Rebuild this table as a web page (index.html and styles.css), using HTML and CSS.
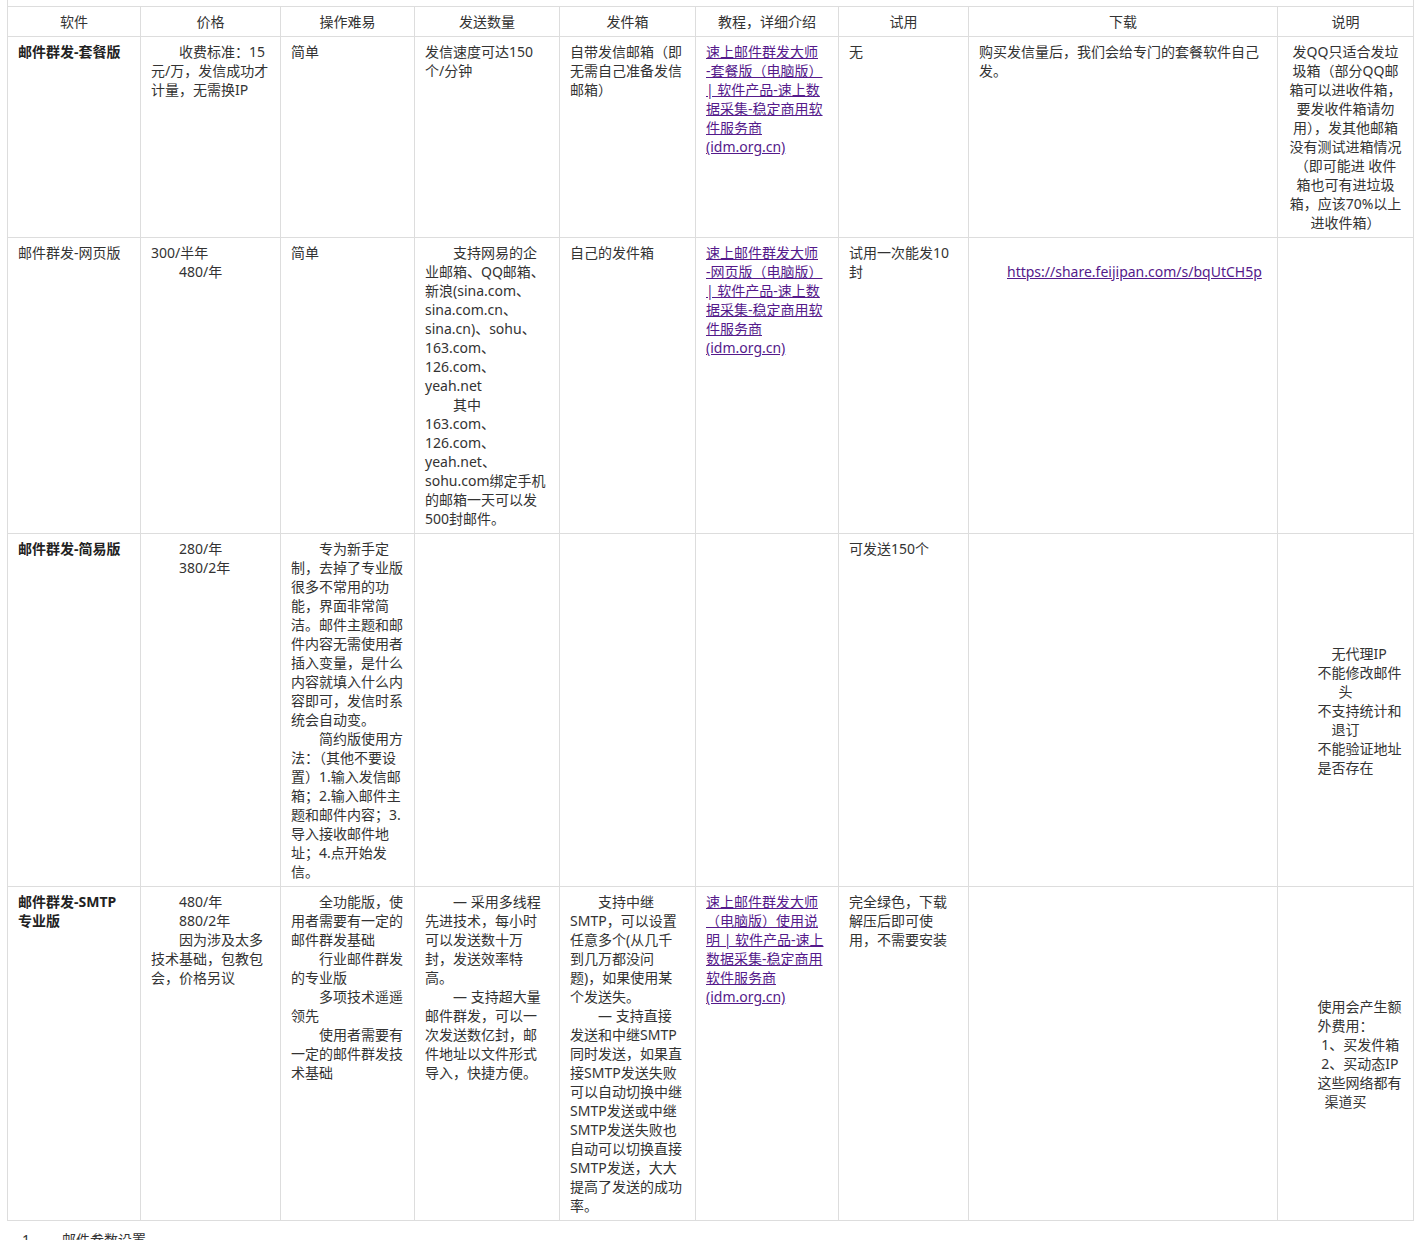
FILE: index.html
```html
<!DOCTYPE html>
<html lang="zh-CN">
<head>
<meta charset="utf-8">
<title>邮件群发软件对比</title>
<link rel="stylesheet" href="styles.css">
</head>
<body>
<table class="sheet">
  <colgroup>
    <col class="w1"><col class="w2"><col class="w3"><col class="w4"><col class="w5"><col class="w6"><col class="w7"><col class="w8"><col class="w9">
  </colgroup>
  <thead>
    <tr class="lead"><td colspan="9"></td></tr>
    <tr>
      <th>软件</th><th>价格</th><th>操作难易</th><th>发送数量</th><th>发件箱</th><th>教程，详细介绍</th><th>试用</th><th>下载</th><th>说明</th>
    </tr>
  </thead>
  <tbody>
    <tr>
      <td class="name">邮件群发-套餐版</td>
      <td><p class="i">收费标准：15<br>元/万，发信成功才<br>计量，无需换IP</p></td>
      <td>简单</td>
      <td>发信速度可达150<br>个/分钟</td>
      <td>自带发信邮箱（即<br>无需自己准备发信<br>邮箱）</td>
      <td><a href="#">速上邮件群发大师<br>-套餐版（电脑版）<br>| 软件产品-速上数<br>据采集-稳定商用软<br>件服务商<br>(idm.org.cn)</a></td>
      <td>无</td>
      <td>购买发信量后，我们会给专门的套餐软件自己<br>发。</td>
      <td class="c">发QQ只适合发垃<br>圾箱（部分QQ邮<br>箱可以进收件箱，<br>要发收件箱请勿<br>用），发其他邮箱<br>没有测试进箱情况<br>（即可能进 收件<br>箱也可有进垃圾<br>箱，应该70%以上<br>进收件箱）</td>
    </tr>
    <tr>
      <td>邮件群发-网页版</td>
      <td><p>300/半年</p><p class="i">480/年</p></td>
      <td>简单</td>
      <td><p class="i">支持网易的企<br>业邮箱、QQ邮箱、<br>新浪(sina.com、<br>sina.com.cn、<br>sina.cn)、sohu、<br>163.com、<br>126.com、<br>yeah.net</p><p class="i">其中<br>163.com、<br>126.com、<br>yeah.net、<br>sohu.com绑定手机<br>的邮箱一天可以发<br>500封邮件。</p></td>
      <td>自己的发件箱</td>
      <td><a href="#">速上邮件群发大师<br>-网页版（电脑版）<br>| 软件产品-速上数<br>据采集-稳定商用软<br>件服务商<br>(idm.org.cn)</a></td>
      <td>试用一次能发10<br>封</td>
      <td><p>&nbsp;</p><p class="i"><a href="#">https://share.feijipan.com/s/bqUtCH5p</a></p></td>
      <td></td>
    </tr>
    <tr>
      <td class="name">邮件群发-简易版</td>
      <td><p class="i">280/年</p><p class="i">380/2年</p></td>
      <td><p class="i">专为新手定<br>制，去掉了专业版<br>很多不常用的功<br>能，界面非常简<br>洁。邮件主题和邮<br>件内容无需使用者<br>插入变量，是什么<br>内容就填入什么内<br>容即可，发信时系<br>统会自动变。</p><p class="i">简约版使用方<br>法：（其他不要设<br>置）1.输入发信邮<br>箱；2.输入邮件主<br>题和邮件内容；3.<br>导入接收邮件地<br>址；4.点开始发<br>信。</p></td>
      <td></td>
      <td></td>
      <td></td>
      <td>可发送150个</td>
      <td></td>
      <td class="mid"><div class="note">　无代理IP<br>不能修改邮件<br>头<br>不支持统计和<br>退订<br>不能验证地址<br>是否存在</div></td>
    </tr>
    <tr>
      <td class="name">邮件群发-SMTP<br>专业版</td>
      <td><p class="i">480/年</p><p class="i">880/2年</p><p class="i">因为涉及太多<br>技术基础，包教包<br>会，价格另议</p></td>
      <td><p class="i">全功能版，使<br>用者需要有一定的<br>邮件群发基础</p><p class="i">行业邮件群发<br>的专业版</p><p class="i">多项技术遥遥<br>领先</p><p class="i">使用者需要有<br>一定的邮件群发技<br>术基础</p></td>
      <td><p class="i">— 采用多线程<br>先进技术，每小时<br>可以发送数十万<br>封，发送效率特<br>高。</p><p class="i">— 支持超大量<br>邮件群发，可以一<br>次发送数亿封，邮<br>件地址以文件形式<br>导入，快捷方便。</p></td>
      <td><p class="i">支持中继<br>SMTP，可以设置<br>任意多个(从几千<br>到几万都没问<br>题)，如果使用某<br>个发送失。</p><p class="i">— 支持直接<br>发送和中继SMTP<br>同时发送，如果直<br>接SMTP发送失败<br>可以自动切换中继<br>SMTP发送或中继<br>SMTP发送失败也<br>自动可以切换直接<br>SMTP发送，大大<br>提高了发送的成功<br>率。</p></td>
      <td><a href="#">速上邮件群发大师<br>（电脑版）使用说<br>明 | 软件产品-速上<br>数据采集-稳定商用<br>软件服务商<br>(idm.org.cn)</a></td>
      <td>完全绿色，下载<br>解压后即可使<br>用，不需要安装</td>
      <td></td>
      <td class="mid"><div class="note">使用会产生额<br>外费用：<br>&nbsp;1、买发件箱<br>&nbsp;2、买动态IP<br>这些网络都有<br>渠道买</div></td>
    </tr>
  </tbody>
</table>
<div class="steps"><span class="num">1.</span><span>邮件参数设置</span></div>
</body>
</html>
```

FILE: styles.css
```css
html, body {
  margin: 0;
  background: #fff;
}

body {
  padding: 0 7px;
  font-family: "Noto Sans", "Noto Sans CJK SC", sans-serif;
  font-size: 14px;
  line-height: 19px;
  color: #333;
}

.sheet {
  width: 1407px;
  border-collapse: collapse;
  table-layout: fixed;
}

.w1 { width: 133px; }
.w2 { width: 140px; }
.w3 { width: 134px; }
.w4 { width: 145px; }
.w5 { width: 136px; }
.w6 { width: 143px; }
.w7 { width: 130px; }
.w8 { width: 309px; }
.w9 { width: 136px; }

.sheet th,
.sheet td {
  border: 1px solid #dddddd;
  padding: 5px 10px;
  vertical-align: top;
  text-align: left;
  white-space: nowrap;
  font-weight: normal;
}

.sheet th {
  text-align: center;
}

.sheet .lead td {
  height: 6px;
  padding: 0;
  border-top: none;
}

p {
  margin: 0;
}

.i {
  text-indent: 2em;
}

.sheet .name {
  font-weight: bold;
  color: #222;
}

a {
  color: #551a8b;
  text-decoration: underline;
}

.sheet .c {
  text-align: center;
}

.sheet .mid {
  vertical-align: middle;
}

.note {
  width: 4em;
  margin: 0 auto;
  text-align: center;
}

.steps {
  display: flex;
  margin: 9px 0 0 15px;
}

.steps .num {
  width: 40px;
}
```
